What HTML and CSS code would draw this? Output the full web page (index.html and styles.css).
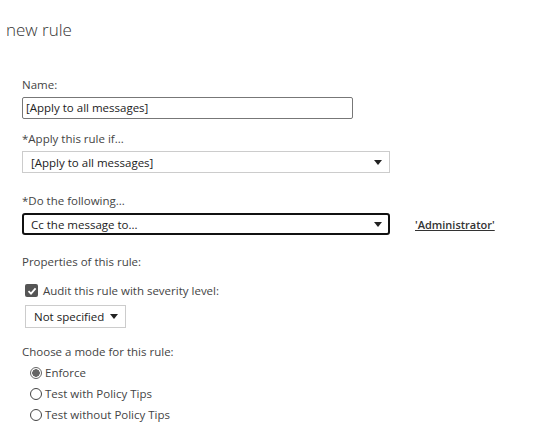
FILE: index.html
```html
<!DOCTYPE html>
<html lang="en">
<head>
  <meta charset="UTF-8" />
  <title>new rule</title>
  <link rel="stylesheet" href="styles.css">
</head>
<body>
  <h1 class="title">new rule</h1>

  <main class="rule-form">
    <div class="field">
      <label class="label">Name:</label>
      <div class="text-input">[Apply to all messages]</div>
    </div>

    <div class="field">
      <label class="label">*Apply this rule if...</label>
      <div class="select wide">
        <span>[Apply to all messages]</span>
        <span class="caret"></span>
      </div>
    </div>

    <div class="field do-field">
      <label class="label">*Do the following...</label>
      <div class="row">
        <div class="select wide focused">
          <span>Cc the message to...</span>
          <span class="caret"></span>
        </div>
        <a class="link" href="#">'Administrator'</a>
      </div>
    </div>

    <div class="section props">
      <div class="label">Properties of this rule:</div>
      <div class="check-row">
        <span class="checkbox">
          <svg width="12" height="12" viewBox="0 0 12 12"><path d="M2.5 6.2 L5 8.6 L9.6 3.4" fill="none" stroke="#fff" stroke-width="1.8"/></svg>
        </span>
        <span>Audit this rule with severity level:</span>
      </div>
      <div class="select small">
        <span>Not specified</span>
        <span class="caret"></span>
      </div>
    </div>

    <div class="section modes">
      <div class="label">Choose a mode for this rule:</div>
      <div class="radio-row"><span class="radio checked"></span>Enforce</div>
      <div class="radio-row"><span class="radio"></span>Test with Policy Tips</div>
      <div class="radio-row"><span class="radio"></span>Test without Policy Tips</div>
    </div>
  </main>
</body>
</html>
```

FILE: styles.css
```css
body {
  margin: 0;
  font-family: 'Open Sans', 'Noto Sans', sans-serif;
  font-size: 11.5px;
  color: #333;
  background: #fff;
}
.title {
  margin: 0;
  padding: 18px 0 0 6px;
  font-size: 17px;
  font-weight: 300;
  color: #333;
}
.rule-form {
  padding: 36px 0 0 22px;
}
.field {
  margin-bottom: 12px;
}
.label {
  display: block;
  color: #444;
  line-height: 16px;
  margin-bottom: 4px;
}
.text-input {
  box-sizing: border-box;
  width: 331px;
  height: 22px;
  border: 1px solid #777;
  border-radius: 2px;
  padding: 2px 3px;
  line-height: 16px;
  color: #222;
}
.select {
  box-sizing: border-box;
  display: flex;
  align-items: center;
  justify-content: space-between;
  height: 22px;
  border: 1px solid #ccc;
  padding: 0 7px 0 8px;
  color: #222;
}
.select.wide {
  width: 368px;
}
.select.focused {
  border: 2px solid #111;
  border-radius: 3px;
  padding: 0 6px 0 7px;
}
.select.small {
  width: 101px;
  height: 23px;
  margin: 7px 0 0 3px;
}
.caret {
  width: 0;
  height: 0;
  border-left: 4px solid transparent;
  border-right: 4px solid transparent;
  border-top: 5px solid #222;
}
.do-field {
  margin-top: 20px;
}
.row {
  display: flex;
  align-items: center;
}
.link {
  margin-left: 25px;
  color: #333;
  font-weight: 600;
  font-size: 11px;
}
.props {
  margin-top: 19px;
}
.modes {
  margin-top: 16px;
}
.modes .label {
  margin-bottom: 2px;
}
.check-row {
  display: flex;
  align-items: center;
  gap: 5px;
  margin: 13px 0 0 3px;
  color: #444;
}
.checkbox {
  display: flex;
  align-items: center;
  justify-content: center;
  width: 13px;
  height: 13px;
  border-radius: 2px;
  background: #555;
}
.radio-row {
  display: flex;
  align-items: center;
  gap: 3px;
  margin-left: 8px;
  height: 21px;
  color: #444;
}
.radio {
  box-sizing: border-box;
  width: 12px;
  height: 12px;
  border: 1px solid #444;
  border-radius: 50%;
  background: #fff;
}
.radio.checked {
  border-color: #666;
  background: radial-gradient(circle, #666 0 3.5px, #fff 4px);
}
```
